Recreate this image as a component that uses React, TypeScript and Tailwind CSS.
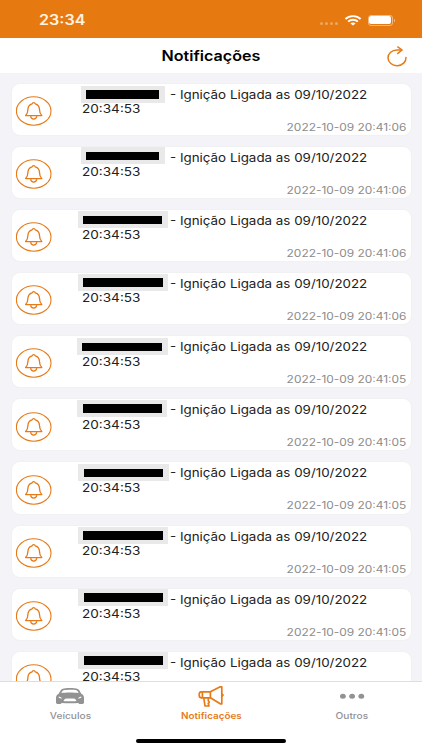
import clsx from 'clsx';

interface Notification {
    sentAt: string;
    // redaction box: left and top inside the card, width
    mask: { left: number; top: number; width: number; inner: number };
}

const notifications: Notification[] = [
    { sentAt: '2022-10-09 20:41:06', mask: { left: 70, top: 3.3, width: 84.3, inner: 5.7 } },
    { sentAt: '2022-10-09 20:41:06', mask: { left: 70, top: 1.6, width: 84.3, inner: 5.7 } },
    { sentAt: '2022-10-09 20:41:06', mask: { left: 67, top: 2.4, width: 90.3, inner: 5.5 } },
    { sentAt: '2022-10-09 20:41:06', mask: { left: 67, top: 1.6, width: 90, inner: 5 } },
    { sentAt: '2022-10-09 20:41:05', mask: { left: 66.5, top: 3.1, width: 90.5, inner: 5.3 } },
    { sentAt: '2022-10-09 20:41:05', mask: { left: 66.5, top: 1.3, width: 90, inner: 5.5 } },
    { sentAt: '2022-10-09 20:41:05', mask: { left: 67.5, top: 2.9, width: 90.5, inner: 5.5 } },
    { sentAt: '2022-10-09 20:41:05', mask: { left: 67, top: 2, width: 90.3, inner: 5 } },
    { sentAt: '2022-10-09 20:41:05', mask: { left: 67.7, top: 0.9, width: 90.3, inner: 5.5 } },
    { sentAt: '2022-10-09 20:41:05', mask: { left: 67.7, top: 0.8, width: 90.3, inner: 5.5 } },
];

function BellIcon() {
    return (
        <svg viewBox="0 0 36 30" className="w-9 h-[30px] shrink-0" fill="none" stroke="#e67a17">
            <ellipse cx="17.7" cy="15" rx="17.3" ry="14.2" strokeWidth="1.1" />
            <path
                d="M9.6 19.6 C11.6 17.9 11.8 16.9 11.9 13.4 C12 10.4 13.6 8.6 16.1 7.9 C16.6 6.2 18.8 6.2 19.3 7.9 C21.8 8.6 23.4 10.4 23.5 13.4 C23.6 16.9 23.8 17.9 25.8 19.6 Z"
                strokeWidth="1.3"
                strokeLinejoin="round"
            />
            <path d="M14.6 20.2 C15.1 24 20.3 24 20.8 20.2" strokeWidth="1.2" />
        </svg>
    );
}

function RefreshIcon() {
    return (
        <svg viewBox="0 0 22 22" className="w-[22px] h-[22px]" fill="none" stroke="#e67a17" strokeWidth="1.5">
            <path d="M20 11.4 A9 7.9 0 1 1 11 3.9 H15.4" strokeLinecap="round" />
            <path d="M11.4 0.6 L16 4 L11.2 7.8" />
        </svg>
    );
}

function WifiIcon() {
    return (
        <svg viewBox="0 0 18 11" className="w-[18px] h-[11px]" fill="none" stroke="#fff" strokeWidth="1.9">
            <path d="M1.4 4 C5.5 0.2 12.5 0.2 16.6 4" />
            <path d="M4.1 6.6 C6.8 4.2 11.2 4.2 13.9 6.6" />
            <path d="M9 10.6 L6.4 8.5 C7.7 7.3 10.3 7.3 11.6 8.5 Z" fill="#fff" stroke="none" />
        </svg>
    );
}

function CarIcon() {
    return (
        <svg viewBox="0 0 30 18" className="w-[30px] h-[18px]">
            <path
                fill="#929292"
                fillRule="evenodd"
                d="M7.2 1.9 C11 .8 19 .8 22.8 1.9 C24.3 2.4 25.4 5.4 26.3 6.7 C28.3 7.6 29 9 29 11 V15.6 C29 16.5 28.4 17 27.5 17 H25 C24.1 17 23.6 16.6 23.5 15.9 C18 16.4 12 16.4 6.5 15.9 C6.4 16.6 5.9 17 5 17 H2.5 C1.6 17 1 16.5 1 15.6 V11 C1 9 1.7 7.6 3.7 6.7 C4.6 5.4 5.7 2.4 7.2 1.9 Z M8 3.4 C7.4 3.7 6.8 5 6.3 6.1 C11 5.4 19 5.4 23.7 6.1 C23.2 5 22.6 3.7 22 3.4 C18.5 2.6 11.5 2.6 8 3.4 Z M3.4 9.8 C3.7 11 5 11.6 7 11.4 C6.5 10.3 5.3 9.8 3.4 9.8 Z M26.6 9.8 C24.7 9.8 23.5 10.3 23 11.4 C25 11.6 26.3 11 26.6 9.8 Z M10 11.8 L8.4 13.9 C12 14.4 18 14.4 21.6 13.9 L20 11.8 C17 11.5 13 11.5 10 11.8 Z"
            />
        </svg>
    );
}

function MegaphoneIcon() {
    return (
        <svg viewBox="0 0 28 24" className="w-7 h-6" fill="none" stroke="#e67a17" strokeWidth="1.7" strokeLinejoin="round">
            <path d="M4 7.8 H13.4 V13.8 H4 C2.7 13.8 2.2 12.6 2.2 10.8 C2.2 9 2.7 7.8 4 7.8 Z M5.4 7.8 V13.8" />
            <path d="M13.4 7.8 L23.2 2.8 H24.8 V19.8 H23.2 L13.4 13.8" />
            <path d="M25.2 9.8 C26.8 10.2 26.8 12 25.2 12.4" fill="#e67a17" strokeWidth="1" />
            <path d="M6.8 13.8 L8 22 H12 L11.2 19.4 C12.6 19 12.4 17.4 11.3 17 V13.8" />
        </svg>
    );
}

function MoreIcon() {
    return (
        <svg viewBox="0 0 28 18" className="w-7 h-[18px]" fill="#929292">
            <ellipse cx="4.9" cy="9.2" rx="2.9" ry="2.5" />
            <ellipse cx="14.1" cy="9.2" rx="2.9" ry="2.5" />
            <ellipse cx="23.3" cy="9.2" rx="2.9" ry="2.5" />
        </svg>
    );
}

function NotificationCard({ sentAt, mask }: Notification) {
    return (
        <div className="relative h-[53.14px] shrink-0 rounded-[9px] bg-white border border-[#f1f1f4] whitespace-nowrap text-[#222]">
            <div className="flex pl-[4px] pt-[12.2px]">
                <BellIcon />
            </div>
            <div
                className="absolute h-[17px] bg-[#e9e9e9] pt-[4.5px]"
                style={{ left: mask.left - 1, top: mask.top - 1, width: mask.width, paddingLeft: mask.inner, paddingRight: mask.inner }}
            >
                <div className="h-[8.5px] bg-black" />
            </div>
            <div className="absolute left-[158px] top-[4px] text-[11.6px] leading-[15px] origin-left scale-x-[1.153]">
                - Ignição Ligada as 09/10/2022
            </div>
            <div className="absolute left-[70.5px] top-[18.4px] text-[11.6px] leading-[15px] origin-left scale-x-[1.17]">
                20:34:53
            </div>
            <div className="absolute right-[4px] top-[36px] text-[10.2px] leading-[14px] origin-right scale-x-[1.17] text-[#8c8c8c]">
                {sentAt}
            </div>
        </div>
    );
}

const tabs = [
    { label: 'Veículos', icon: <CarIcon />, active: false },
    { label: 'Notificações', icon: <MegaphoneIcon />, active: true },
    { label: 'Outros', icon: <MoreIcon />, active: false },
];

export default function App() {
    return (
        <div className="w-[422px] h-[750px] overflow-hidden flex flex-col bg-[#f3f3f8] font-['Inter',sans-serif]">
            <div className="h-[38px] shrink-0 bg-[#e77911] flex items-center justify-between pl-[39px] pr-[27px] text-[#fff3e0]">
                <span className="text-[14px] leading-[18px] font-semibold origin-left scale-x-[1.15] mt-[2px]">23:34</span>
                <div className="flex items-center mt-[2px]">
                    <div className="flex gap-[2px] mt-[7px] mr-[6px]">
                        <i className="w-[3px] h-[2.5px] rounded-full bg-[#f0a55c]" />
                        <i className="w-[3px] h-[2.5px] rounded-full bg-[#f0a55c]" />
                        <i className="w-[3px] h-[2.5px] rounded-full bg-[#f0a55c]" />
                        <i className="w-[3px] h-[2.5px] rounded-full bg-[#f0a55c]" />
                    </div>
                    <WifiIcon />
                    <div className="ml-[6px] w-[25px] h-[11px] rounded-[3px] border border-[#f3b980] p-[0.5px]">
                        <div className="h-full rounded-[2px] bg-white" />
                    </div>
                    <div className="w-[1.5px] h-[3px] ml-[1px] bg-[#f3b980] rounded-r" />
                </div>
            </div>

            <div className="relative h-[35px] shrink-0 bg-white flex items-center justify-center">
                <h1 className="text-[14px] leading-[18px] font-semibold text-black scale-x-[1.15]">Notificações</h1>
                <button type="button" className="absolute right-[14px] top-[8px]">
                    <RefreshIcon />
                </button>
            </div>

            <div className="flex-1 min-h-0 overflow-hidden flex flex-col gap-[10px] px-[10.5px] pt-[9.7px]">
                {notifications.map((item, i) => (
                    <NotificationCard key={i} {...item} />
                ))}
            </div>

            <div className="relative h-[69px] shrink-0 bg-white border-t border-[#dedee0] grid grid-cols-3">
                {tabs.map((tab) => (
                    <div
                        key={tab.label}
                        className={clsx('flex flex-col items-center', tab.active ? 'text-[#e67a17]' : 'text-[#929292]')}
                    >
                        <div className="h-[27px] flex items-center">{tab.icon}</div>
                        <span className={clsx('mt-[0.5px] text-[8.6px] leading-[12px]', tab.active ? 'font-semibold scale-x-[1.15]' : 'font-medium scale-x-[1.18]')}>
                            {tab.label}
                        </span>
                    </div>
                ))}
                <div className="absolute left-[136px] bottom-[7px] w-[150px] h-[4px] rounded-full bg-black" />
            </div>
        </div>
    );
}
